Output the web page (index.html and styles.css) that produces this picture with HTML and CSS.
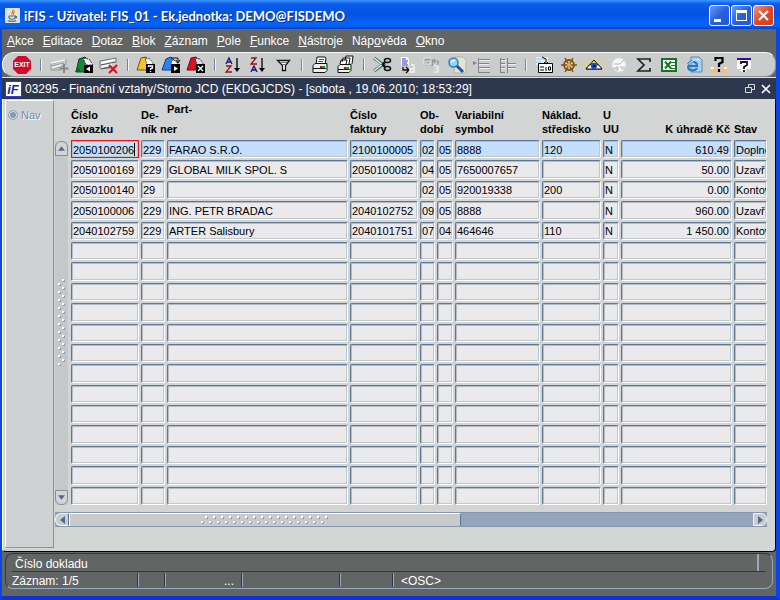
FILE: index.html
```html
<!DOCTYPE html>
<html lang="cs">
<head>
    <meta charset="UTF-8">
    <meta name="viewport" content="width=device-width, initial-scale=1.0">
    <title>iFIS - Uživatel: FIS_01</title>
    <link rel="stylesheet" href="styles.css">
</head>
<body>
    <div class="window">
        <header class="titlebar">
            <svg class="app-icon" viewBox="0 0 16 16">
                <rect width="16" height="16" rx="1" fill="#e4e4de"/>
                <path d="M8.500 1.500C10 3 6 4.500 7.500 7M10.500 3.500C8 5 10 6 8.500 7.500" fill="none" stroke="#e76f00" stroke-width="1.200"/>
                <path d="M4 8.500h7c0 3-1 3.500-3.500 3.500S4 11 4 8.500M11 9c2-.5 2 1.500 0 2M3 13.500c3 1 6 1 9 0" fill="none" stroke="#4a6f8c" stroke-width="1.200"/>
            </svg>
            <h1 class="title">iFIS - Uživatel: FIS_01 - Ek.jednotka: DEMO@FISDEMO</h1>
            <div class="window-buttons">
                <button class="win-button" aria-label="Minimalizovat"><svg viewBox="0 0 19 19"><path d="M4 13h7v3H4z" fill="#fff"/></svg></button>
                <button class="win-button" aria-label="Maximalizovat"><svg viewBox="0 0 19 19"><path d="M4 4h11v11H4zM5 7v7h9V7z" fill="#fff" fill-rule="evenodd"/></svg></button>
                <button class="win-button win-close" aria-label="Zavřít"><svg viewBox="0 0 19 19"><path d="M5 5l9 9M14 5l-9 9" stroke="#fff" stroke-width="2.200"/></svg></button>
            </div>
        </header>

        <nav class="menubar">
            <button><u>A</u>kce</button>
            <button><u>E</u>ditace</button>
            <button><u>D</u>otaz</button>
            <button><u>B</u>lok</button>
            <button><u>Z</u>áznam</button>
            <button><u>P</u>ole</button>
            <button><u>F</u>unkce</button>
            <button><u>N</u>ástroje</button>
            <button>Náp<u>o</u>věda</button>
            <button><u>O</u>kno</button>
        </nav>

        <div class="toolbar">
            <button class="tool" aria-label="Konec"><svg viewBox="0 0 24 20"><path d="M8 1h8l5 5v8l-5 5H8l-5-5V6z" fill="#d4082c"/><text class="exit-text" x="12" y="12" text-anchor="middle">EXIT</text></svg></button>
            <span class="sep"></span>
            <button class="tool" aria-label="Uložit"><svg viewBox="0 0 24 20"><path d="M4 9l15-4v5M4 9v6h10M5 11l12-3M5 14l12-3" fill="none" stroke="#999"/><path d="M4 8l14-3M5 13l9-3" stroke="#f4f4f4" stroke-width="1.500"/><path d="M17 9v9M12.500 13.500h9" stroke="#858585" stroke-width="2"/></svg></button>
            <button class="tool" aria-label="Vložit záznam"><svg viewBox="0 0 24 20"><path d="M7 4l6-2 7 8-8 7H4z" fill="#128a35" stroke="#06451a"/><path d="M11 3l6 1 4 6h-7z" fill="#f4f4f4" stroke="#333" stroke-dasharray="2 1"/><path d="M3 17l3-5 3 5z" fill="#063"/><path d="M12 10h9v8h-9z" fill="#000"/><path d="M18 11.500v5L14 14z" fill="#fff"/></svg></button>
            <button class="tool" aria-label="Smazat záznam"><svg viewBox="0 0 24 20"><path d="M3 6l16-3v5M3 6v7h10" fill="none" stroke="#777"/><path d="M4 8l14-3M4 12l11-3" stroke="#fff" stroke-width="2"/><path d="M4 10l14-3M4 14l10-2" stroke="#555"/><path d="M12 10l8 8M20 10l-8 8" stroke="#e00a18" stroke-width="2"/></svg></button>
            <span class="sep"></span>
            <button class="tool" aria-label="Zadat dotaz"><svg viewBox="0 0 24 20"><path d="M7 3l5-1 7 7-5 6H3z" fill="#f6c426" stroke="#765600"/><path d="M11 3l5 1 4 6h-7z" fill="#fff" stroke="#555" stroke-dasharray="2 1"/><path d="M12 9h9v9h-9z" fill="#000"/><path d="M14.500 12v-1h4v2l-2 1v1M16.500 16v1" fill="none" stroke="#fff" stroke-width="1.400"/></svg></button>
            <button class="tool" aria-label="Provést dotaz"><svg viewBox="0 0 24 20"><path d="M7 4l5-2 7 7-5 6H3z" fill="#2f83e4" stroke="#103c8b"/><path d="M12 5l5 1 3 5h-7z" fill="#fff" stroke="#555" stroke-dasharray="2 1"/><path d="M12 3h7v4m-2-2l2 3 2-3" fill="none" stroke="#111"/><path d="M12 9h9v9h-9z" fill="#000"/><path d="M15 11v5l4-2.500z" fill="#fff"/></svg></button>
            <button class="tool" aria-label="Zrušit dotaz"><svg viewBox="0 0 24 20"><path d="M7 3l5-1 7 7-5 6H3z" fill="#dd1022" stroke="#750812"/><path d="M11 3l5 1 4 6h-7z" fill="#ddd" stroke="#444" stroke-dasharray="2 1"/><path d="M12 9h9v9h-9z" fill="#000"/><path d="M14 11l5 5M19 11l-5 5" stroke="#fff" stroke-width="1.300"/></svg></button>
            <span class="sep"></span>
            <button class="tool" aria-label="Třídit vzestupně"><svg viewBox="0 0 24 20"><path d="M5 9l3-6 3 6M6 7h4" fill="none" stroke="#15157d" stroke-width="1.300"/><path d="M5 11h5l-5 6h6" fill="none" stroke="#9b1010" stroke-width="1.300"/><path d="M16 3v12" stroke="#000" stroke-width="1.300"/><path d="M13 13h6l-3 4z"/></svg></button>
            <button class="tool" aria-label="Třídit sestupně"><svg viewBox="0 0 24 20"><path d="M5 3h5L5 9h6" fill="none" stroke="#9b1010" stroke-width="1.300"/><path d="M5 17l3-6 3 6M6 15h4" fill="none" stroke="#15157d" stroke-width="1.300"/><path d="M16 3v12" stroke="#000" stroke-width="1.300"/><path d="M13 13h6l-3 4z"/></svg></button>
            <button class="tool" aria-label="Filtr"><svg viewBox="0 0 24 20"><path d="M6.500 5.500h12l-4 5v5h-3v-5z" fill="#fff" stroke="#111" stroke-width="1.300"/><path d="M9 7.500h7M11 9.500h3" stroke="#777"/></svg></button>
            <span class="sep"></span>
            <button class="tool" aria-label="Tisk"><svg viewBox="0 0 24 20"><path d="M8 10l1-8h8l1 1-1 7z" fill="#fff" stroke="#111"/><path d="M11 4.500h5M10 6.500h5" stroke="#3344cc"/><path d="M5 10.500l2-2h12v7l-2 2H5z" fill="#eee" stroke="#111"/><path d="M5 13.500h13" stroke="#111"/><path d="M12 12h2" stroke="#e00" stroke-width="2"/><path d="M14 12h3" stroke="#0a0" stroke-width="2"/></svg></button>
            <button class="tool" aria-label="Tisk všech"><svg viewBox="0 0 24 20"><path d="M12 5l1-4h7l-1 8M9 7l1-4h7l-1 6M7 9l1-4h6l-1 4" fill="#fff" stroke="#111"/><path d="M5 11.500l2-2h11v6l-2 2H5z" fill="#eee" stroke="#111"/><path d="M5 14.500h12" stroke="#111"/><path d="M11 13h2" stroke="#e00" stroke-width="2"/><path d="M13 13h3" stroke="#0a0" stroke-width="2"/></svg></button>
            <span class="sep"></span>
            <button class="tool" aria-label="Vyjmout"><svg viewBox="0 0 24 20"><path d="M4 3l11 8M4 16l11-8" stroke="#49686b" stroke-width="3"/><path d="M4 3l10 8M4 16l10-8" stroke="#d6ffff" stroke-width="1.300"/><ellipse cx="17.500" cy="5.500" rx="3" ry="2" fill="none" stroke="#111" stroke-width="1.600"/><ellipse cx="17.500" cy="13.500" rx="3" ry="2" fill="none" stroke="#111" stroke-width="1.600"/><path d="M12 10l3-3M12 9l3 3" stroke="#111" stroke-width="2"/></svg></button>
            <button class="tool" aria-label="Kopírovat"><svg viewBox="0 0 24 20"><path d="M6 2h6l2 2v7H6z" fill="#fff"/><path d="M7 4h4M7 6h6M7 8h5M7 10h6" stroke="#2635d0"/><path d="M8 12v3h5M11 12l3 3-3 3" fill="none" stroke="#111" stroke-width="1.300"/><path d="M16 10h3v7h-4v-3h4" fill="none" stroke="#f5f5f5" stroke-width="1.300"/></svg></button>
            <button class="tool" aria-label="Vložit"><svg viewBox="0 0 24 20"><path d="M4 3h7l2 2v6H4z" fill="#999"/><path d="M4 3h7v7H4zM6 6h4v3H6z" fill="none" stroke="#eee"/><path d="M13 6h5v4M15 4l-2 2 2 2" fill="none" stroke="#929292" stroke-width="1.200"/><path d="M14 11h4v6h-4M15 14h3" fill="none" stroke="#f4f4f4" stroke-width="1.200"/></svg></button>
            <button class="tool" aria-label="Hledat"><svg viewBox="0 0 24 20"><path d="M10 2h8l3 3v13H9z" fill="#e4e2d0" stroke="#b7b59c"/><circle cx="8.500" cy="7.500" r="4.500" fill="#8ed7f4" stroke="#347bba" stroke-width="1.500"/><path d="M6 7l4-2" stroke="#fff" stroke-width="1.500"/><path d="M12 11l6 6" stroke="#1555b0" stroke-width="3"/></svg></button>
            <button class="tool" aria-label="Nový řádek"><svg viewBox="0 0 24 20"><path d="M3 6l4 2-4 2z" fill="#858585"/><path d="M8.500 3v15M8 4.500h12M8 8.500h11M8 12.500h12M8 17.500h12" fill="none" stroke="#858585"/><path d="M9 5.500h11M9 9.500h10M9 13.500h11" stroke="#eee"/></svg></button>
            <button class="tool" aria-label="Smazat řádek"><svg viewBox="0 0 24 20"><path d="M5.500 3v15M5 4.500h5M5 8.500h5M5 12.500h5M5 17.500h5M12.500 3v15M12 8.500h9M12 12.500h9" fill="none" stroke="#858585"/><path d="M6 5.500h5M6 9.500h5M13 9.500h8M6 13.500h5M13 13.500h8" stroke="#eee"/></svg></button>
            <span class="sep"></span>
            <button class="tool" aria-label="Seznam hodnot"><svg viewBox="0 0 24 20"><path d="M4 2h12v8H4z" fill="#dff3f7"/><path d="M4 4h9M4 7h5" stroke="#8ac4dd"/><path d="M6.500 8.500h14v9h-14z" fill="#fff" stroke="#000"/><path d="M8 12h4M8 15h4M14 12v4M16.500 12h2v3h-2z" fill="none" stroke="#000"/><path d="M10 2l4 2v5M12 7l2 2 2-2" fill="none" stroke="#000"/></svg></button>
            <button class="tool" aria-label="Nastavení"><svg viewBox="0 0 24 20"><circle cx="12" cy="10" r="5" fill="none" stroke="#88500a" stroke-width="1.800"/><path d="M4 10h16M8 3l8 14M16 3L8 17" stroke="#88500a" stroke-width="1.500"/><circle cx="12" cy="10" r="2" fill="#e1b05b"/></svg></button>
            <button class="tool" aria-label="Přehled"><svg viewBox="0 0 24 20"><path d="M7 7L4 4M12 5V2M17 7l3-3M5 10H2M19 10h3" stroke="#f3d73d" stroke-width="1.500"/><path d="M12 5l8 9H4z" fill="#e6db4c" stroke="#111"/><path d="M4 14c4-7 12-7 16 0z" fill="#fff" stroke="#111"/><circle cx="12" cy="11" r="3" fill="#174bd2"/><circle cx="12" cy="11" r="1"/></svg></button>
            <button class="tool" aria-label="Čas"><svg viewBox="0 0 24 20"><circle cx="12" cy="10" r="7" fill="#f7f7f7" stroke="#dedede"/><path d="M7 9h6l4-4M7 12v3M9 12h2v3H9zM13 12h2v3M17 11v3" fill="none" stroke="#b4b4b4"/></svg></button>
            <button class="tool" aria-label="Součet"><svg viewBox="0 0 24 20"><path d="M18 7V4H6l6 6-6 6h12v-3" fill="none" stroke="#222" stroke-width="1.700"/></svg></button>
            <button class="tool" aria-label="Export do Excelu"><svg viewBox="0 0 24 20"><path d="M5 4h14v12H5z" fill="#f7fff5" stroke="#18702b" stroke-width="2"/><path d="M8 6.500l6 7M14 6.500l-6 7" stroke="#18702b" stroke-width="2"/><path d="M14 7.500h4M14 10.500h4M14 13.500h4" stroke="#18702b"/></svg></button>
            <button class="tool" aria-label="Prohlížeč"><svg viewBox="0 0 24 20"><path d="M9 2h8l3 3v12H9z" fill="#a9cff2" stroke="#5c88bd"/><path d="M6 11h9c0-6-9-6-9 0s7 5 9 2" fill="none" stroke="#2478c4" stroke-width="2.200"/><path d="M4 14C3 9 14 3 18 5" fill="none" stroke="#d9f1fb"/></svg></button>
            <button class="tool" aria-label="Kontextová nápověda"><svg viewBox="0 0 24 20"><path d="M4 10h3v3l3 1v4H4zM20 10h-3v3l-3 1v4h6z" fill="#f2c27d"/><path d="M4 13h3M17 13h3" stroke="#fff" stroke-width="2"/><path d="M8.500 6V3h7v4l-3.500 2v3M12 14v3" fill="none" stroke="#000" stroke-width="2.200"/></svg></button>
            <button class="tool" aria-label="Nápověda"><svg viewBox="0 0 24 20"><path d="M5 3h14v11h-5v3H9v-3H5z" fill="#f8f8f8"/><path d="M5 4h14" stroke="#3700c7" stroke-width="2"/><path d="M9 9V7h6v3l-3 2v2M12 15v2" fill="none" stroke="#111" stroke-width="1.800"/></svg></button>
        </div>

        <div class="doc-title">
            <svg class="doc-icon" viewBox="0 0 17 16"><rect x=".5" y=".5" width="16" height="15" fill="#fff" stroke="#2a3bd8"/><text class="logo-text" x="8" y="13" text-anchor="middle">iF</text></svg>
            <h2>03295 - Finanční vztahy/Storno JCD (EKDGJCDS) - [sobota , 19.06.2010; 18:53:29]</h2>
            <button aria-label="Obnovit okno"><svg viewBox="0 0 10 10"><path d="M3.500 3V.5h6v5H7M.5 3.500h6v5h-6z" fill="none" stroke="#d7dae0"/></svg></button>
            <button aria-label="Zavřít okno"><svg viewBox="0 0 10 10"><path d="M1 1l8 8M9 1L1 9" stroke="#fff" stroke-width="1.600"/></svg></button>
        </div>

        <main class="form">
            <aside class="side">
                <label><input type="radio" name="nav" disabled>Nav</label>
            </aside>
            <section class="content">
                <div class="records">
                    <div class="vscroll">
                        <button class="arrow-up" aria-label="Nahoru"><svg viewBox="0 0 8 5"><path d="M4 0l4 5H0z"/></svg></button>
                        <svg class="grip-v">
                            <defs><pattern id="dots-v" width="8" height="8" patternUnits="userSpaceOnUse"><path d="M5 1h2v2H5zM1 5h2v2H1z" fill="#8d9bb5"/><path d="M4 0h2v2H4zM0 4h2v2H0z" fill="#fff"/></pattern></defs>
                            <rect width="100%" height="100%" fill="url(#dots-v)"/>
                        </svg>
                        <button class="arrow-down" aria-label="Dolů"><svg viewBox="0 0 8 5"><path d="M0 0h8L4 5z"/></svg></button>
                    </div>
                    <table class="grid">
                        <thead>
                            <tr>
                                <th>Číslo<br>závazku</th>
                                <th>De-<br>ník ner</th>
                                <th class="raised">Part-</th>
                                <th>Číslo<br>faktury</th>
                                <th>Ob-<br>dobí</th>
                                <th></th>
                                <th>Variabilní<br>symbol</th>
                                <th>Náklad.<br>středisko</th>
                                <th>U<br>UU</th>
                                <th class="amount">K úhradě Kč</th>
                                <th>Stav</th>
                            </tr>
                        </thead>
                        <tbody id="rows"></tbody>
                    </table>
                </div>
                <div class="hscroll">
                    <button class="arrow-left" aria-label="Vlevo"><svg viewBox="0 0 5 8"><path d="M5 0v8L0 4z"/></svg></button>
                    <div class="hthumb">
                        <svg class="grip-h">
                            <defs><pattern id="dots-h" width="8" height="9" patternUnits="userSpaceOnUse"><path d="M5 1h2v2H5zM1 6h2v2H1z" fill="#8d9bb5"/><path d="M4 0h2v2H4zM0 5h2v2H0z" fill="#fff"/></pattern></defs>
                            <rect width="100%" height="100%" fill="url(#dots-h)"/>
                        </svg>
                    </div>
                    <button class="arrow-right" aria-label="Vpravo"><svg viewBox="0 0 5 8"><path d="M0 0v8l5-4z"/></svg></button>
                </div>
            </section>
        </main>

        <footer class="status">
            <div class="status-box">
                <div class="message">Číslo dokladu</div>
                <div class="status-cells">
                    <span>Záznam: 1/5</span>
                    <span></span>
                    <span class="dots">...</span>
                    <span></span>
                    <span></span>
                    <span>&lt;OSC&gt;</span>
                </div>
            </div>
        </footer>
    </div>

    <script>
        const columns = ['Číslo závazku', 'Deník', 'Partner', 'Číslo faktury', 'Období od', 'Období do',
            'Variabilní symbol', 'Nákladové středisko', 'U', 'K úhradě Kč', 'Stav'];
        const records = [
            ['2050100206', '229', 'FARAO S.R.O.', '2100100005', '02', '05', '8888', '120', 'N', '610.49', 'Doplně'],
            ['2050100169', '229', 'GLOBAL MILK SPOL. S', '2050100082', '04', '05', '7650007657', '', 'N', '50.00', 'Uzavř'],
            ['2050100140', '29', '', '', '02', '05', '920019338', '200', 'N', '0.00', 'Kontov'],
            ['2050100006', '229', 'ING. PETR BRADAC', '2040102752', '09', '05', '8888', '', 'N', '960.00', 'Uzavř'],
            ['2040102759', '229', 'ARTER Salisbury', '2040101751', '07', '04', '464646', '110', 'N', '1 450.00', 'Kontov']
        ];
        const visibleRows = 18;
        const body = document.getElementById('rows');

        for (let r = 0; r < visibleRows; r++) {
            const tr = document.createElement('tr');
            if (r === 0) tr.className = 'current';
            columns.forEach(function(name, c) {
                const td = document.createElement('td');
                const input = document.createElement('input');
                input.type = 'text';
                input.value = records[r] ? records[r][c] : '';
                input.setAttribute('aria-label', name + ' ' + (r + 1));
                if (c === 9) input.className = 'amount';
                td.appendChild(input);
                tr.appendChild(td);
            });
            body.appendChild(tr);
        }
    </script>
</body>
</html>
```
FILE: styles.css
```css
:root {
    --chrome: #616563;
    --face: #d3d5d5;
    --field: #eae9ec;
    --edge: #5d7796;
    --navy: #2d384f;
    --trough: #94a4ba;
}
* {
    box-sizing: border-box;
}
body {
    margin: 0;
    font-family: "Liberation Sans", Arial, sans-serif;
    font-size: 12px;
}
button {
    margin: 0;
    padding: 0;
    border: none;
    background: none;
    font: inherit;
    color: inherit;
}
svg {
    display: block;
}
.window {
    display: flex;
    flex-direction: column;
    height: 100vh;
    border: solid #0a46e0;
    border-width: 0 4px 4px 2px;
    border-bottom-color: #0a35d0;
    background: var(--chrome);
}

/* Title bar */
.titlebar {
    display: flex;
    align-items: center;
    flex: none;
    height: 29px;
    margin: 0 -4px 0 -2px;
    padding: 2px 6px 0 5px;
    background: linear-gradient(#3d95ff 0, #0a5cea 4px, #0453e2 14px, #0564fb 23px, #0460f4 26px, #0340c0 29px);
}
.app-icon {
    width: 15px;
    height: 15px;
}
.title {
    flex: 1;
    margin: 0 0 0 4px;
    font-family: Lato, sans-serif;
    font-size: 13px;
    font-weight: bold;
    color: #fff;
    text-shadow: 1px 1px #0a2a80;
    white-space: nowrap;
}
.window-buttons {
    display: flex;
    gap: 1px;
}
.win-button {
    width: 21px;
    height: 21px;
    border: 1px solid #fff;
    border-radius: 3px;
    background: linear-gradient(135deg, #6c9bf5, #2a5fe0 50%, #2257d8);
}
.win-close {
    background: linear-gradient(135deg, #f0967c, #e0492a 50%, #cf3f1d);
}

/* Menu */
.menubar {
    display: flex;
    flex: none;
    align-items: center;
    gap: 9px;
    height: 23px;
    padding-left: 5px;
    color: #fff;
}

/* Toolbar */
.toolbar {
    display: flex;
    flex: none;
    align-items: center;
    height: 25px;
    padding-left: 7px;
    border: 1px solid #f6f6f6;
    border-bottom-color: #8d8f8f;
    border-right-color: #8d8f8f;
    border-radius: 12px 10px 10px 12px;
    background: #cbcdcd;
}
.tool {
    width: 25px;
    height: 20px;
}
.tool svg {
    width: 24px;
    height: 20px;
}
.exit-text {
    font-size: 7px;
    font-weight: bold;
    fill: #fff;
}
.sep {
    width: 2px;
    height: 12px;
    margin: 0 5px;
    border-left: 1px solid #72839f;
    border-right: 1px solid #f4f4f4;
}

/* Document */
.doc-title {
    display: flex;
    flex: none;
    align-items: center;
    gap: 6px;
    height: 22px;
    padding: 0 5px 0 3px;
    border-top: 1px solid #dfe1e3;
    background: var(--navy);
    color: #fff;
}
.doc-title h2 {
    flex: 1;
    margin: 0;
    font-size: 12px;
    font-weight: normal;
    white-space: nowrap;
}
.doc-title button svg {
    width: 10px;
    height: 10px;
}
.doc-icon {
    width: 17px;
    height: 16px;
    margin-right: -3px;
}
.logo-text {
    font-size: 13px;
    font-style: italic;
    font-weight: bold;
    fill: #1423c8;
}
.form {
    display: flex;
    flex: 1;
    min-height: 0;
    border-left: 1px solid #fff;
    border-right: 1px solid #000;
    border-bottom: 1px solid #000;
    border-radius: 0 0 4px 4px;
    background: var(--face);
}
.side {
    flex: none;
    width: 49px;
    margin: 1px 0 3px 2px;
    border: 1px solid #fff;
    border-right: 1px solid #8393ad;
    border-bottom: 1px solid #8393ad;
    background: #cfd2d2;
}
.side label {
    display: flex;
    align-items: center;
    gap: 3px;
    margin-top: 8px;
    padding-left: 2px;
    font-size: 11px;
    color: #7488a6;
    text-shadow: 1px 1px #fff;
}
.side input {
    appearance: none;
    width: 10px;
    height: 10px;
    margin: 0;
    border: 1px solid #9ba9bd;
    border-radius: 50%;
    background: #8798b0;
    box-shadow: inset 0 0 0 1px #dce1e8;
}
.content {
    display: flex;
    flex: 1;
    flex-direction: column;
    min-width: 0;
    padding: 3px 8px 24px 1px;
}
.records {
    display: flex;
    flex: 1;
    gap: 3px;
    min-height: 0;
}
.vscroll {
    display: flex;
    flex: none;
    flex-direction: column;
    align-items: center;
    justify-content: space-between;
    width: 13px;
    margin-top: 39px;
    background: #c5c8c9;
}
.vscroll button {
    display: flex;
    align-items: center;
    justify-content: center;
    width: 13px;
    height: 15px;
    border: 1px solid #7d8ea8;
    background: #d3d5d5;
}
.vscroll svg,
.hscroll svg {
    fill: #50698c;
}
.vscroll button svg {
    width: 7px;
    height: 5px;
}
.vscroll .arrow-up {
    border-radius: 6px 6px 0 0;
}
.vscroll .arrow-down {
    border-radius: 0 0 6px 6px;
}
.grip-v {
    width: 8px;
    height: 88px;
}

/* Records */
.grid {
    display: flex;
    flex: 1;
    flex-direction: column;
    min-width: 0;
    font-size: 11px;
}
.grid tr {
    display: grid;
    grid-template-columns: 68px 24px minmax(0, 1fr) 68px 15px 16px 85px 59px 16px 111px 33px;
    column-gap: 2px;
    min-height: 0;
}
.grid thead tr {
    height: 38px;
    padding-bottom: 4px;
}
.grid th {
    align-self: end;
    padding: 0;
    line-height: 14px;
    text-align: left;
    white-space: nowrap;
}
.grid .raised {
    align-self: start;
}
.grid .amount {
    padding-right: 2px;
    text-align: right;
}
.grid tbody {
    display: grid;
    flex: 1;
    grid-auto-rows: minmax(0, 1fr);
    row-gap: 2px;
    min-height: 0;
}
.grid td {
    display: flex;
    position: relative;
    min-width: 0;
    padding: 0;
}
.grid input {
    width: 100%;
    min-width: 0;
    height: 100%;
    padding: 1px 0 0 1px;
    border: 1px solid var(--edge);
    border-right-color: #fff;
    border-bottom-color: #fff;
    border-radius: 2px;
    background: var(--field);
    box-shadow: inset 1px 1px #b3bdca, inset -1px -1px #c3c6c8;
    font: inherit;
    color: #000;
    outline: none;
}
.grid .current input {
    background: #c3dffb;
}
.grid .current td:first-child input {
    border-color: #f01010;
    border-radius: 0;
}
/* text cursor of the active field */
.grid .current td:first-child::after {
    content: "";
    position: absolute;
    top: 3px;
    bottom: 2px;
    right: 4px;
    width: 1px;
    background: #000;
}

/* Horizontal scrollbar */
.hscroll {
    display: flex;
    flex: none;
    height: 15px;
    margin-top: 7px;
    border-top: 1px solid #8496b3;
    border-bottom: 1px solid #8496b3;
    background: var(--trough);
}
.hscroll button {
    display: flex;
    flex: none;
    align-items: center;
    justify-content: center;
    width: 14px;
    border: 1px solid #f3f3f3;
    background: #cbcdcd;
}
.hscroll button svg {
    width: 5px;
    height: 8px;
}
.hscroll .arrow-left {
    border-right-color: #5d7796;
    border-radius: 6px 0 0 6px;
}
.hscroll .arrow-right {
    margin-left: auto;
    border-radius: 0 6px 6px 0;
}
.hthumb {
    display: flex;
    align-items: center;
    justify-content: center;
    width: 55%;
    border-top: 1px solid #fff;
    border-left: 1px solid #fff;
    border-right: 1px solid #5d7796;
    background: #c9cbcb;
}
.grip-h {
    width: 128px;
    height: 9px;
}

/* Status bar */
.status {
    flex: none;
    padding: 1px 3px 7px;
    color: #fff;
}
.status-box {
    padding: 0 6px;
    border: 1px solid #9aa7c2;
    border-top-color: var(--navy);
    border-left-color: var(--navy);
    border-radius: 8px;
}
.message {
    height: 17px;
    margin-right: 7px;
    padding-left: 3px;
    border-right: 2px solid #9aa7c2;
    line-height: 20px;
}
.status-cells {
    display: grid;
    grid-template-columns: 127px 27px 77px 98px 53px 1fr;
    border-top: 1px solid var(--navy);
    line-height: 17px;
}
.status-cells span {
    height: 14px;
    margin: 1px 0;
    border-right: 1px solid #9aa7c2;
    box-shadow: inset -1px 0 var(--navy);
}
.status-cells span:last-child {
    padding-left: 7px;
    border: none;
    box-shadow: none;
}
.status-cells .dots {
    padding-right: 8px;
    text-align: right;
}
```
